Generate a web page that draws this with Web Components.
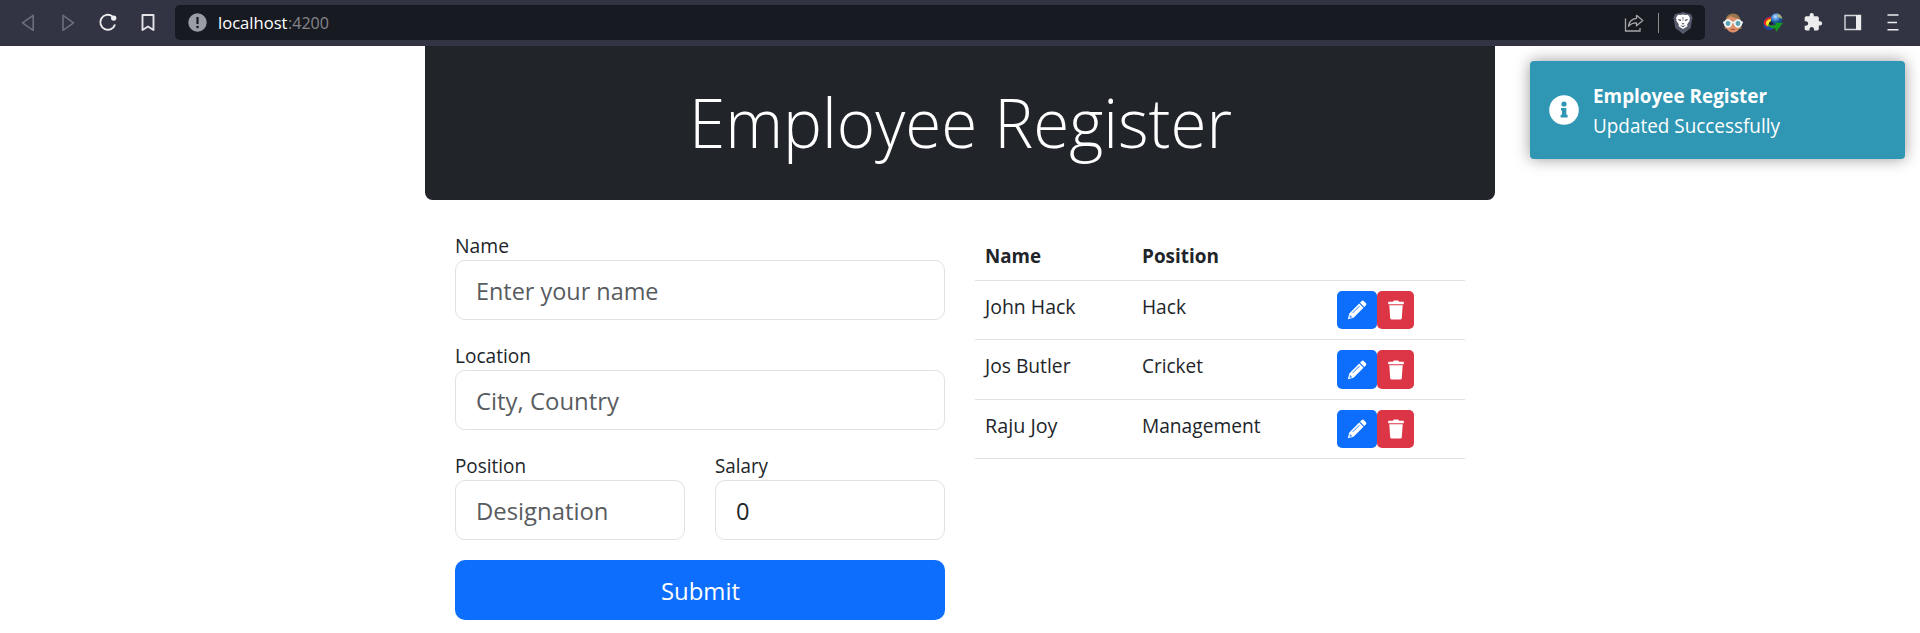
<!DOCTYPE html>
<html lang="en">
<head>
<meta charset="utf-8">
<title>Employee Register</title>
<style>
html,body{margin:0;height:100%;overflow:hidden;background:#fff}
body{font-family:"Open Sans","Noto Sans",sans-serif;color:#212529;display:flex;flex-direction:column}
</style>
</head>
<body>
<browser-bar></browser-bar>
<employee-page></employee-page>
<toast-note heading="Employee Register" hw="174" message="Updated Successfully" mw="187"></toast-note>
<script>
const define=(name,html,setup)=>customElements.define(name,class extends HTMLElement{
  connectedCallback(){
    if(this.shadowRoot)return;
    const t=document.createElement('template');
    t.innerHTML=typeof html==='function'?html(this):html;
    this.attachShadow({mode:'open'}).append(t.content.cloneNode(true));
    if(setup)setup(this,this.shadowRoot);
  }
});

/* One line of text set to a given advance width. */
define('fit-text',e=>`<style>
:host{display:inline-block;white-space:pre;width:${e.getAttribute('w')}px}
span{display:inline-block;transform-origin:0 50%}
</style><span><slot></slot></span>`,(e,r)=>{
  const s=r.querySelector('span');
  const n=s.getBoundingClientRect().width;
  if(n)s.style.transform=`scaleX(${+e.getAttribute('w')/n})`;
});

define('browser-bar',`<style>
:host{display:flex;box-sizing:border-box;flex:none;height:46px;background:#323443;align-items:flex-start;padding:5px 15px 0 0}
nav{display:flex;align-items:center;height:35px;width:175px;box-sizing:border-box;padding-left:18px;gap:20px}
svg{display:block;flex:none}
.url{display:flex;align-items:center;width:1530px;height:35px;border-radius:5px;background:#181a21;box-sizing:border-box;padding:0 12px 0 13px}
.addr{flex:1;margin-left:11px;font-size:17.2px;line-height:35px;color:#85868b;white-space:nowrap}
.addr b{font-weight:400;color:#fff}
.sep{width:1px;height:20px;background:#8b8c91;margin:0 14px 0 14px}
.ext{display:flex;align-items:center;height:35px;padding-left:18px;gap:20px}
</style>
<nav>
<svg width="20" height="20" viewBox="0 0 20 20" fill="none" stroke="#6c6e7a" stroke-width="1.6" stroke-linejoin="round"><path d="M15.200 2.300v15L4.500 9.800z"/></svg>
<svg width="20" height="20" viewBox="0 0 20 20" fill="none" stroke="#6c6e7a" stroke-width="1.6" stroke-linejoin="round"><path d="M5 2.300v15L15.500 9.800z"/></svg>
<svg width="20" height="20" viewBox="0 0 20 20" fill="none" stroke="#eeeef0" stroke-width="1.9"><path d="M14.300 3.200A7.500 7.500 0 1 0 17 11.500"/><circle cx="15.700" cy="5.100" r="2.700" fill="#eeeef0" stroke="none"/></svg>
<svg width="20" height="20" viewBox="0 0 20 20" fill="none" stroke="#e4e4e8" stroke-width="1.900" stroke-linejoin="round"><path d="M4.500 2h11v15L10 13.500 4.500 17z"/></svg>
</nav>
<div class="url">
<svg width="19" height="19" viewBox="0 0 19 19"><circle cx="9.500" cy="9.500" r="9.200" fill="#9b9da6"/><path d="M9.500 4v7" stroke="#181a21" stroke-width="2.200"/><circle cx="9.500" cy="14" r="1.300" fill="#181a21"/></svg>
<div class="addr"><fit-text w="69.500"><b>localhost</b></fit-text><fit-text w="41">:4200</fit-text></div>
<svg width="20" height="20" viewBox="0 0 20 20" fill="none" stroke="#a5a6aa" stroke-width="1.300"><path d="M1.500 5.500v12.500h14.500v-3"/><path d="M12.500 2.300l6.300 5.300-6.300 5.200V9.800C9 9.600 6.600 10.900 4.500 13.300 5 8.900 7.600 5.700 12.500 5.300z" stroke-linejoin="round"/></svg>
<div class="sep"></div>
<svg width="20" height="22" viewBox="0 0 20 22"><path d="M10 0l4 1.200 4 .8 1.700 4-.7 2L17.800 16 10 22 2.200 16 1 8 .3 6 2 2l4-.8z" fill="#55596b"/><path d="M10 2.500l2.500.5 2.500-.3 2 3-.5 2 .2 1-2.500 3.500.2 2L10 17 5.600 14.200l.2-2-2.500-3.500.2-1L3 5.700l2-3 2.500.3z" fill="#fff"/><path d="M5 7l3.300.7-.5 1.300-1.800-.4zM15 7l-3.300.7.5 1.300 1.800-.4zM8.500 11.300h3L10 12.800zM7 13l3 .9 3-.9-3 2.200zM9.600 5h.8l-.2 4h-.4z" fill="#3c3f4e"/></svg>
</div>
<div class="ext">
<svg width="20" height="20" viewBox="0 0 20 20"><path d="M1.500 16C1.500 5 4 .5 10 .5S18.500 5 18.500 16z" fill="#98764e"/><path d="M3 9c0-4 3-5 5-6 2 2 9 2 9 6v4c0 4-4 6.500-7 6.500S3 17 3 13z" fill="#dd9067"/><path d="M0 9.500h20" stroke="#e9f1f2" stroke-width="1.800"/><circle cx="5" cy="10.500" r="3.300" fill="#5ba0ae" stroke="#eef5f6" stroke-width="1.800"/><circle cx="15" cy="10.500" r="3.300" fill="#5ba0ae" stroke="#eef5f6" stroke-width="1.800"/><path d="M8 16.500h4" stroke="#a84f3f"/></svg>
<svg width="20" height="20" viewBox="0 0 20 20"><defs><radialGradient id="g" cx=".4" cy=".3"><stop offset="0" stop-color="#c4e0ff"/><stop offset=".5" stop-color="#5697df"/><stop offset="1" stop-color="#174d91"/></radialGradient></defs><path d="M9 3C3 4 0 7 .3 11.500.8 15 4 17.500 9 17l2-4z" fill="#1d45ac"/><path d="M9 3.500C3 4.500.5 7 .8 11l2.200 2.500L10 12z" fill="#e2281c"/><path d="M9.500 5.500C4.500 6 2.500 8 3 11.500l2 2 5-3z" fill="#f6e52a"/><path d="M10 7.500c-3 .5-4.500 2-4 4l2 1 3-2z" fill="#151d38"/><circle cx="13.500" cy="6" r="5.800" fill="url(#g)"/><path d="M14 1c3 0 5 2 5.300 5L15 4z" fill="#dcc864" opacity=".7"/><path d="M4.500 10.500c3 2.500 6 2.500 8.500 1l-1-2 8 .5-7 9-.5-3.500C8 15.500 5.500 14 4.500 10.500z" fill="#159b20"/></svg>
<svg width="20" height="20" viewBox="0 0 24 24"><path transform="translate(0 -1)" fill="#ececef" d="M20.500 11H19V7c0-1.100-.9-2-2-2h-4V3.500a2.500 2.500 0 0 0-5 0V5H4c-1.100 0-1.990.9-1.990 2v3.800H3.500c1.490 0 2.700 1.210 2.700 2.700s-1.210 2.700-2.700 2.700H2V20c0 1.100.9 2 2 2h3.800v-1.500c0-1.490 1.210-2.700 2.700-2.700s2.700 1.210 2.700 2.700V22H17c1.100 0 2-.9 2-2v-4h1.500a2.500 2.500 0 0 0 0-5z"/></svg>
<svg width="20" height="20" viewBox="0 0 20 20"><path d="M2 2.500h15.500v14H2z" fill="none" stroke="#d5d5da" stroke-width="1.400"/><path d="M13 2h5v15h-5z" fill="#ececef"/></svg>
<svg width="20" height="20" viewBox="0 0 20 20" stroke="#ececef" stroke-width="1.600"><path d="M4.500 2h11M4.500 9.500h9.500M4.500 16.800h11"/></svg>
</div>`);

define('toast-note',e=>`<style>
:host{position:absolute;left:1530px;top:61px;width:375px;height:98px;box-sizing:border-box;border-radius:4px;background:#2f96b4;color:#fff;box-shadow:0 0 15px #999;display:flex;align-items:center;padding-left:19px;gap:13.500px;font-size:19.600px;line-height:30px}
.t{display:flex;flex-direction:column;padding-top:2px}
.t b{font-weight:700}
</style>
<svg width="30" height="30" viewBox="0 0 30 30"><circle cx="15" cy="15" r="14.800" fill="#fff"/><path fill="#2f96b4" d="M12 13h5.300v6.800h1.300v2.600h-7v-2.600H13v-4.200h-1z"/><circle cx="15" cy="9" r="2.600" fill="#2f96b4"/></svg>
<div class="t"><b><fit-text w="${e.getAttribute('hw')}">${e.getAttribute('heading')}</fit-text></b><fit-text w="${e.getAttribute('mw')}">${e.getAttribute('message')}</fit-text></div>`);

define('form-field',e=>`<style>
:host{display:block;flex:1;font-size:19.600px}
label{display:block;height:30px;line-height:32px}
.box{box-sizing:border-box;height:60px;border:1px solid #dee2e6;border-radius:10px;padding:0 0 0 19.500px;font-size:24.500px;line-height:60px;color:${e.hasAttribute('filled')?'#212529':'#595c5f'}}
</style>
<label><fit-text w="${e.getAttribute('lw')}">${e.getAttribute('label')}</fit-text></label>
<div class="box"><fit-text w="${e.getAttribute('w')}"><slot></slot></fit-text></div>`);

define('employee-form',`<style>
:host{display:flex;flex-direction:column;gap:20px;width:490px}
.row{display:flex;gap:30px}
button{all:unset;height:60px;border-radius:10px;background:#0d6efd;color:#fff;text-align:center;font-size:24.500px;line-height:62px}
</style>
<form-field label="Name" lw="54" w="182.500">Enter your name</form-field>
<form-field label="Location" lw="76" w="143">City, Country</form-field>
<div class="row"><form-field label="Position" lw="71" w="132.500">Designation</form-field>
<form-field label="Salary" lw="53" w="13.500" filled>0</form-field></div>
<button><fit-text w="79">Submit</fit-text></button>`);

define('row-actions',`<style>
:host{display:flex;height:38.400px}
span{display:flex;align-items:center;justify-content:center;border-radius:5px;background:#0d6efd;width:40px}
span+span{background:#dc3545;width:37px}
</style>
<span><svg width="20" height="20" viewBox="0 0 20 20"><path fill="#fff" d="M.8 19.300L2.300 13.500 12.200 3.500l4.300 4.300L6.500 17.800zM13 2.700L14.700 1Q15.700.2 16.800 1L19 3.200q.8 1 0 2L17.300 7z"/><path d="M5.700 12.900l6.700-6.700" stroke="#0d6efd" stroke-width=".9"/><path d="M2.800 14.800l2.500 2.500-2.700.800z" fill="#0d6efd" opacity=".75"/></svg></span>
<span><svg width="18" height="20" viewBox="0 0 18 20"><path fill="#fff" d="M1.200 1.800H6Q6.300.500 7.300.500h3.400q1 0 1.300 1.300h4.800v2.400H1.200zM2.300 5.200h13.400l-.9 12.800q-.1 1.500-1.600 1.500H4.800q-1.500 0-1.600-1.500z"/></svg></span>`);

define('employee-table',`<style>
:host{display:block;width:490px;font-size:19.600px}
.r{display:grid;grid-template-columns:157px 195px 1fr;box-sizing:border-box;height:59.400px;border-bottom:1px solid #dee2e6;padding:10px 0 0 10px;line-height:32px}
.h{height:51px;font-weight:700}
</style>
<div class="r h"><fit-text w="56">Name</fit-text><fit-text w="77">Position</fit-text></div>
${[['John Hack',90.5,'Hack',44],['Jos Butler',85.5,'Cricket',61],['Raju Joy',72.5,'Management',118.5]].map(([n,a,p,b])=>`<div class="r"><fit-text w="${a}">${n}</fit-text><fit-text w="${b}">${p}</fit-text><row-actions></row-actions></div>`).join('')}`);

define('employee-page',`<style>
:host{display:block;width:1070px;margin:0 auto}
header{height:154px;border-radius:0 0 7.500px 7.500px;background:#212529;color:#fff;text-align:center;font-size:68.600px;font-weight:300;line-height:151px}
main{display:flex;gap:30px;padding:30px 30px 0}
</style>
<header><fit-text w="543">Employee Register</fit-text></header>
<main><employee-form></employee-form><employee-table></employee-table></main>`);
</script>
</body>
</html>
